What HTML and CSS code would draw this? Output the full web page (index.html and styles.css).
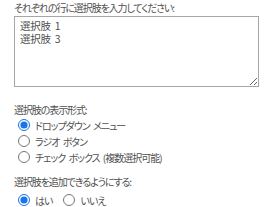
FILE: index.html
```html
<!DOCTYPE html>
<html lang="ja">
	<head>
		<meta charset="utf-8" />
		<link rel="stylesheet" href="styles.css">
	</head>
	<body>
		<div class="form">
			<label class="field-label" for="choices">それぞれの行に選択肢を入力してください:</label>
			<textarea id="choices" class="choices">選択肢 1
選択肢 3</textarea>

			<div class="field-label group-label">選択肢の表示形式:</div>
			<div class="options column">
				<label class="option"><input type="radio" name="display" checked=""><span>ドロップダウン メニュー</span></label>
				<label class="option"><input type="radio" name="display"><span>ラジオ ボタン</span></label>
				<label class="option"><input type="radio" name="display"><span>チェック ボックス (複数選択可能)</span></label>
			</div>

			<div class="field-label group-label second">選択肢を追加できるようにする:</div>
			<div class="options row">
				<label class="option"><input type="radio" name="fillin" checked=""><span>はい</span></label>
				<label class="option"><input type="radio" name="fillin"><span>いいえ</span></label>
			</div>
		</div>
	</body>
</html>
```

FILE: styles.css
```css
body {
	margin: 0;
	background-color: #ffffff;
	color: #505050;
	font-family: "Noto Sans CJK JP", "Noto Sans", sans-serif;
	font-size: 10px;
	letter-spacing: -1.1px;
	font-feature-settings: "palt";
}

.form {
	padding: 1px 13px 0 14px;
}

.field-label {
	display: block;
	line-height: 14px;
	height: 14px;
}

.choices {
	display: block;
	box-sizing: border-box;
	width: 245px;
	height: 71px;
	margin: 1px 0 0 0;
	padding: 3px 5px;
	border: 1px solid #a6a6a6;
	border-radius: 0;
	color: #505050;
	font-family: inherit;
	font-size: 10.5px;
	letter-spacing: -0.3px;
	word-spacing: 2px;
	line-height: 12.5px;
	font-feature-settings: "palt";
	resize: vertical;
}

.group-label {
	margin-top: 16px;
}

.group-label.second {
	margin-top: 10px;
	margin-bottom: 3px;
}

.options {
	display: flex;
}

.options.column {
	flex-direction: column;
}

.options.row {
	flex-direction: row;
	gap: 7px;
}

.option {
	display: flex;
	align-items: center;
	height: 16px;
	padding-left: 4px;
}

.option input {
	width: 12px;
	height: 12px;
	margin: 0 5px 0 0;
	accent-color: #1a73e8;
}

.option span {
	letter-spacing: -1px;
	word-spacing: 2px;
}
```
